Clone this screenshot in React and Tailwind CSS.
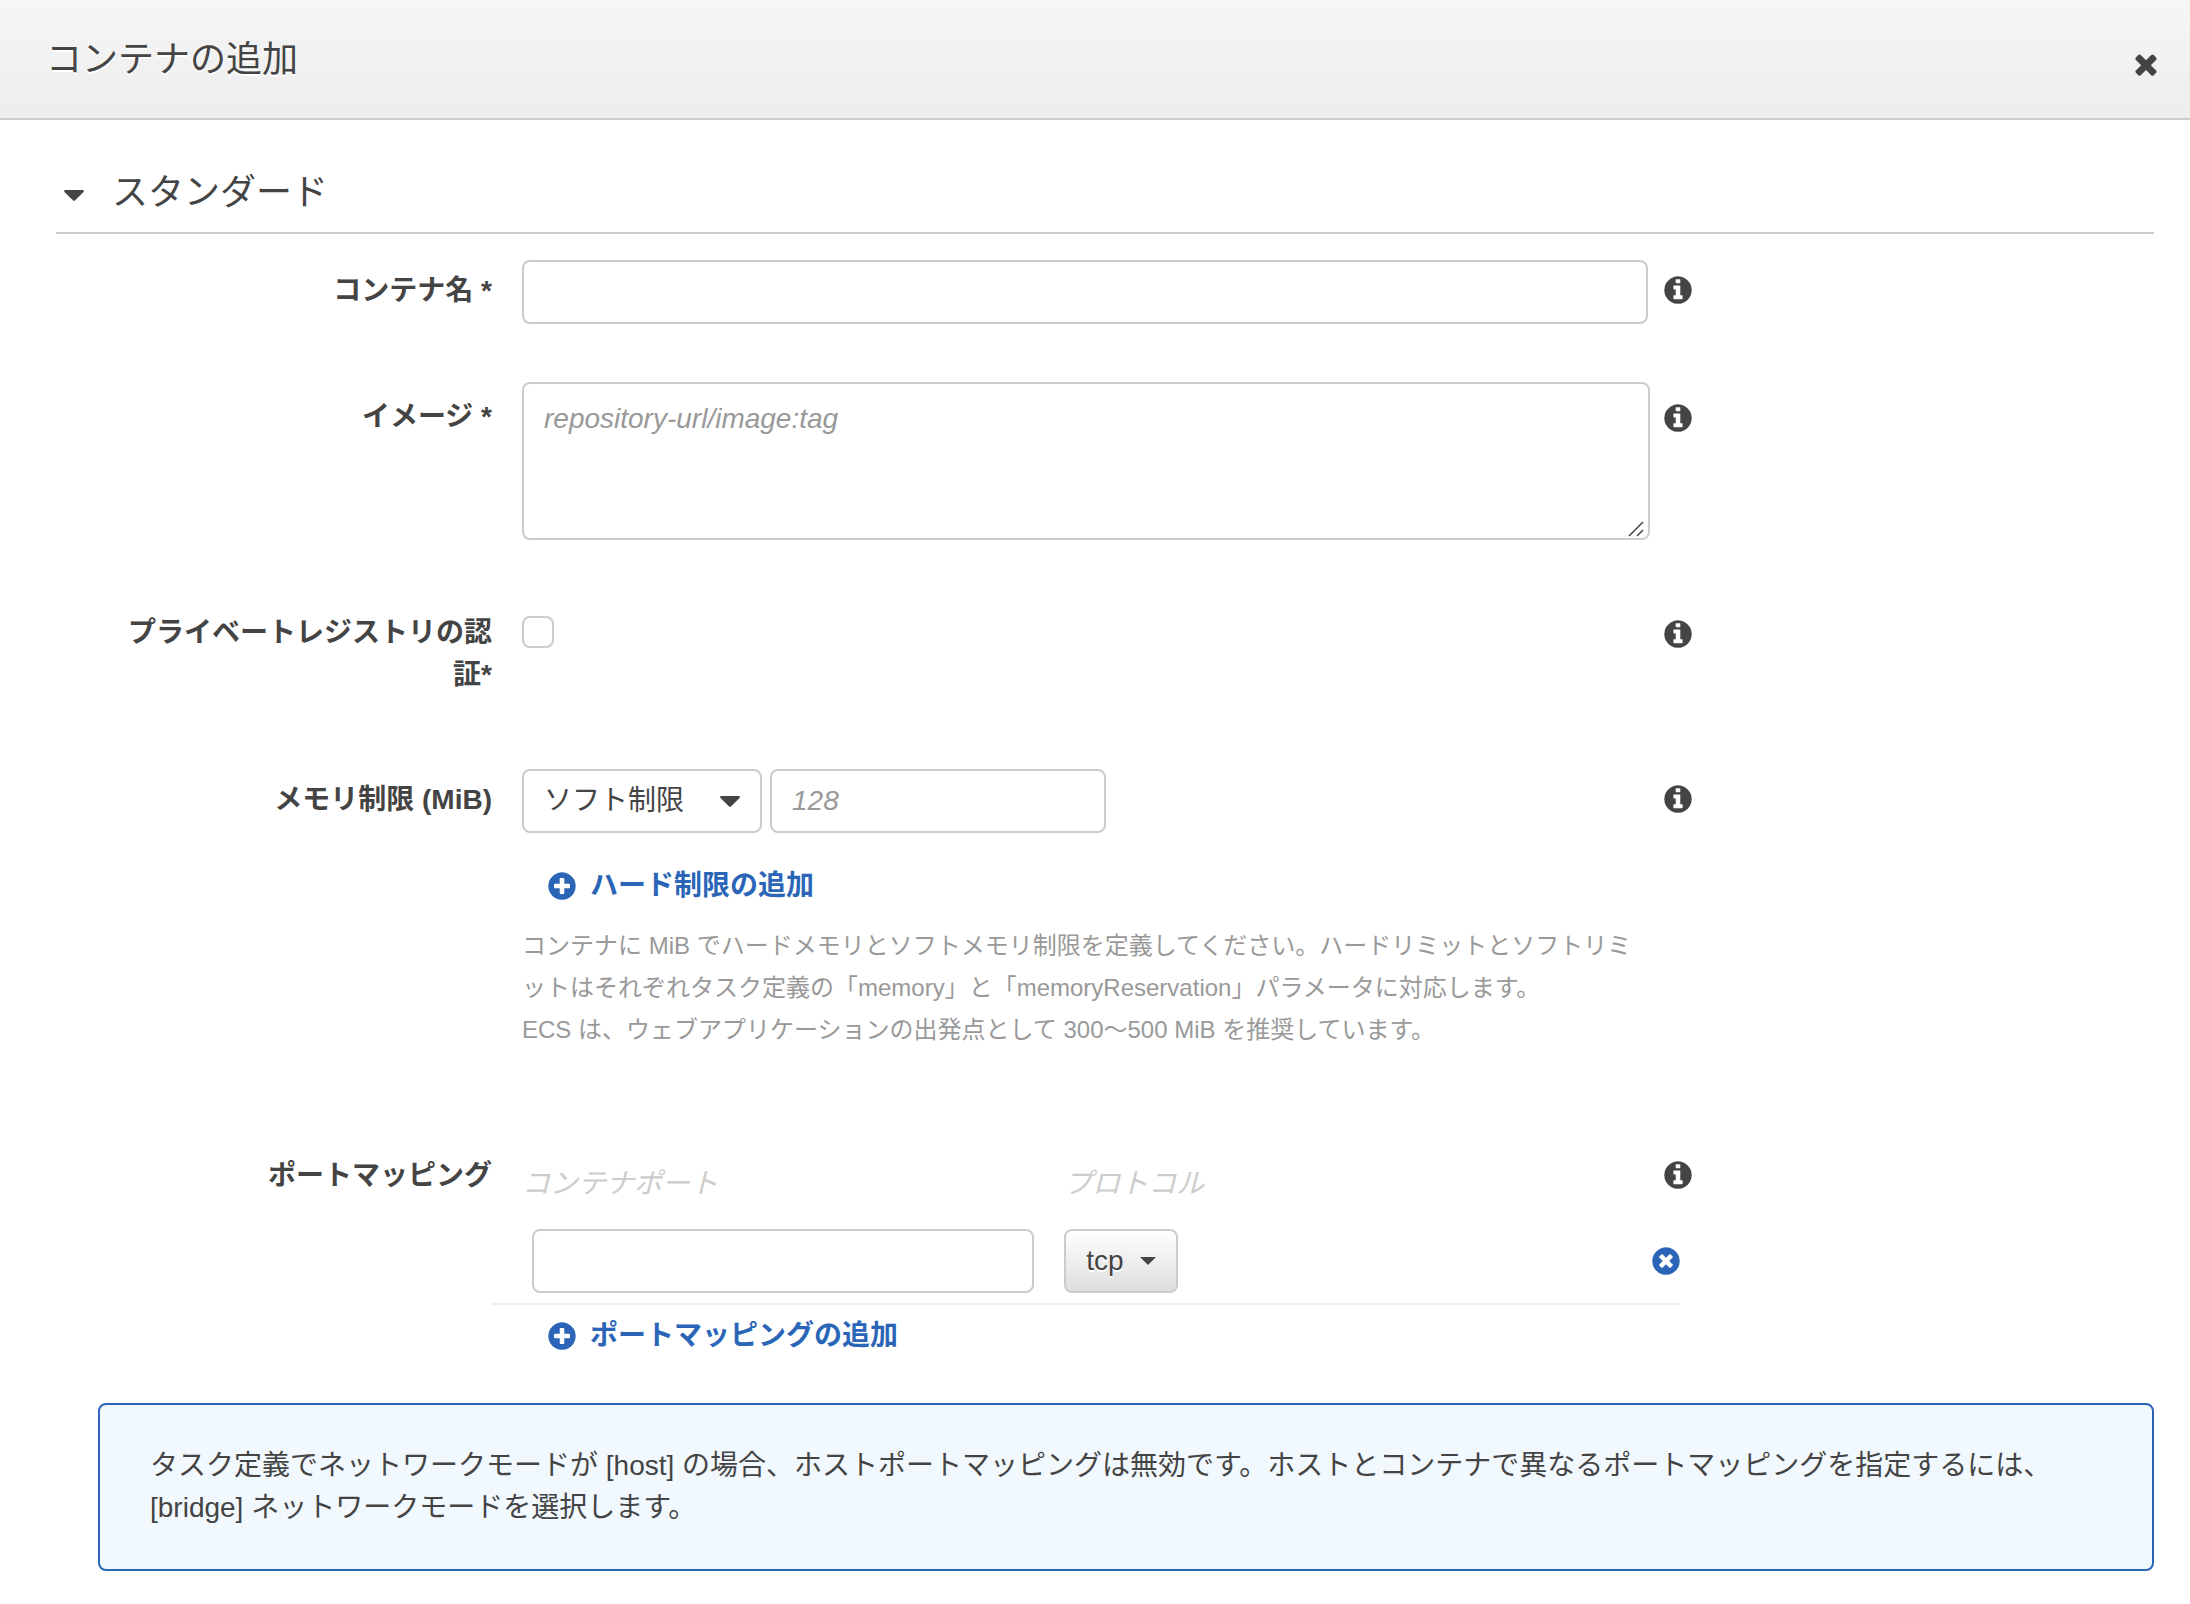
import React, { useState } from "react";

const CIRCLE =
  "M1664 896q0 209-103 385.5t-279.5 279.5-385.5 103-385.5-103-279.5-279.5-103-385.5 103-385.5 279.5-279.5 385.5-103 385.5 103 279.5 279.5 103 385.5z";

const icons = {
  info:
    "M1152 1376v-160q0-14-9-23t-23-9h-96v-512q0-14-9-23t-23-9h-320q-14 0-23 9t-9 23v160q0 14 9 23t23 9h96v320h-96q-14 0-23 9t-9 23v160q0 14 9 23t23 9h448q14 0 23-9t9-23zM1024 480v-160q0-14-9-23t-23-9h-192q-14 0-23 9t-9 23v160q0 14 9 23t23 9h192q14 0 23-9t9-23z" +
    CIRCLE,
  plus:
    "M1344 960v-128q0-26-19-45t-45-19h-256v-256q0-26-19-45t-45-19h-128q-26 0-45 19t-19 45v256h-256q-26 0-45 19t-19 45v128q0 26 19 45t45 19h256v256q0 26 19 45t45 19h128q26 0 45-19t19-45v-256h256q26 0 45-19t19-45z" +
    CIRCLE,
  remove:
    "M1277 1122q0-26-19-45l-181-181 181-181q19-19 19-45 0-27-19-46l-90-90q-19-19-46-19-26 0-45 19l-181 181-181-181q-19-19-45-19-27 0-46 19l-90 90q-19 19-19 46 0 26 19 45l181 181-181 181q-19 19-19 45 0 27 19 46l90 90q19 19 46 19 26 0 45-19l181-181 181 181q19 19 45 19 27 0 46-19l90-90q19-19 19-46z" +
    CIRCLE,
  close:
    "M1490 1322q0 40-28 68l-136 136q-28 28-68 28t-68-28l-294-294-294 294q-28 28-68 28t-68-28l-136-136q-28-28-28-68t28-68l294-294-294-294q-28-28-28-68t28-68l136-136q28-28 68-28t68 28l294 294 294-294q28-28 68-28t68 28l136 136q28 28 28 68t-28 68l-294 294 294 294q28 28 28 68z",
};

function Icon({ name, className = "size-8" }) {
  return (
    <svg
      viewBox="0 0 1792 1792"
      fill="currentColor"
      fillRule="evenodd"
      className={className}
      aria-hidden="true"
    >
      <path d={icons[name]} />
    </svg>
  );
}

function Caret({ className }) {
  return (
    <svg
      viewBox="0 0 20 11"
      fill="currentColor"
      className={className}
      aria-hidden="true"
    >
      <path d="M1 0h18q1.6 0.6 0.5 2l-8.3 8.3q-1.2 1-2.4 0l-8.3-8.3q-1.1-1.4 0.5-2z" />
    </svg>
  );
}

function InfoButton({ className = "pt-3.5" }) {
  return (
    <div className={className}>
      <button type="button" aria-label="情報" className="block -ml-0.5">
        <Icon name="info" />
      </button>
    </div>
  );
}

function AddLink({ children, onClick }) {
  return (
    <button
      type="button"
      onClick={onClick}
      className="ml-6 flex items-center gap-3 font-bold leading-[42px] text-[#2a65b7]"
    >
      <Icon name="plus" />
      {children}
    </button>
  );
}

function Row({ label, htmlFor, labelClass = "pt-2.5", infoClass, children }) {
  return (
    <div className="grid grid-cols-[466fr_1142fr_490fr]">
      <label
        htmlFor={htmlFor}
        className={`max-w-[410px] justify-self-end pr-[30px] text-right font-bold leading-[42px] ${labelClass}`}
      >
        {label}
      </label>
      <div className="pr-3.5">{children}</div>
      <InfoButton className={infoClass} />
    </div>
  );
}

const inputClass =
  "block h-16 rounded-lg border-2 border-[#ccc] bg-white px-5 outline-none placeholder:italic placeholder:text-[#999]";

export default function App() {
  const [auth, setAuth] = useState(false);
  const [limit, setLimit] = useState("soft");
  const [ports, setPorts] = useState([{ id: 1, port: "", protocol: "tcp" }]);

  const addPort = () =>
    setPorts([...ports, { id: Date.now(), port: "", protocol: "tcp" }]);

  const removePort = (id) => setPorts(ports.filter((p) => p.id !== id));

  const updatePort = (id, values) =>
    setPorts(ports.map((p) => (p.id === id ? { ...p, ...values } : p)));

  return (
    <div
      lang="ja"
      className="min-h-screen bg-white font-['Liberation_Sans','Noto_Sans_CJK_JP',sans-serif] text-[28px] text-[#444]"
    >
      <header className="flex h-[120px] items-center justify-between border-b-2 border-[#ccc] bg-linear-to-b from-[#f6f6f6] to-[#ededed] pt-0.5 pr-7 pl-[46px]">
        <h1 className="text-4xl text-shadow-[0_2px_0_#fff]">コンテナの追加</h1>
        <button type="button" aria-label="閉じる" className="mt-2">
          <Icon name="close" />
        </button>
      </header>

      <form
        className="pt-10 pr-9 pb-8 pl-14"
        onSubmit={(e) => e.preventDefault()}
      >
        <h2 className="flex h-[74px] items-start border-b-2 border-[#ccc] pl-2 text-4xl leading-[66px]">
          <button type="button" className="flex items-center gap-7">
            <Caret className="mt-1 h-[11px] w-5" />
            スタンダード
          </button>
        </h2>

        <div className="mt-[26px] space-y-[58px]">
          <Row label="コンテナ名 *" htmlFor="name">
            <div className="pr-0.5">
              <input id="name" type="text" className={`${inputClass} w-full`} />
            </div>
          </Row>

          <Row
            label="イメージ *"
            htmlFor="image"
            labelClass="pt-3.5"
            infoClass="pt-5"
          >
            <div className="relative">
              <textarea
                id="image"
                placeholder="repository-url/image:tag"
                className={`${inputClass} h-[158px] w-full resize-none py-3.5`}
              />
              <svg
                viewBox="0 0 16 16"
                className="pointer-events-none absolute right-1.5 bottom-[3px] size-4"
                stroke="#444"
                strokeWidth="1.5"
                aria-hidden="true"
              >
                <path d="M1 15L15 1M9 15l6-6" />
              </svg>
            </div>
          </Row>

          <div className="pb-[15px]">
            <Row
              label="プライベートレジストリの認証*"
              htmlFor="auth"
              labelClass="pt-3.5"
              infoClass="pt-5"
            >
              <input
                id="auth"
                type="checkbox"
                checked={auth}
                onChange={(e) => setAuth(e.target.checked)}
                className="mt-[18px] block size-8 appearance-none rounded-lg border-2 border-[#ccc] checked:bg-[#2a65b7]"
              />
            </Row>
          </div>

          <div className="pb-9">
            <Row label="メモリ制限 (MiB)" htmlFor="memory">
              <div className="flex gap-2">
                <div className="relative">
                  <select
                    aria-label="制限の種類"
                    value={limit}
                    onChange={(e) => setLimit(e.target.value)}
                    className={`${inputClass} w-60 appearance-none`}
                  >
                    <option value="soft">ソフト制限</option>
                    <option value="hard">ハード制限</option>
                  </select>
                  <Caret className="pointer-events-none absolute top-[27px] right-[22px] h-[11px] w-5" />
                </div>
                <input
                  id="memory"
                  type="text"
                  placeholder="128"
                  className={`${inputClass} w-[336px]`}
                />
              </div>
              <div className="mt-8">
                <AddLink>ハード制限の追加</AddLink>
              </div>
              <p className="mt-[18px] text-2xl leading-[42px] text-[#999]">
                コンテナに MiB でハードメモリとソフトメモリ制限を定義してください。ハードリミットとソフトリミットはそれぞれタスク定義の「memory」と「memoryReservation」パラメータに対応します。
                <br />
                ECS は、ウェブアプリケーションの出発点として 300〜500 MiB を推奨しています。
              </p>
            </Row>
          </div>

          <Row label="ポートマッピング" htmlFor="port-1">
            <div className="-mr-[30px] -ml-[30px]">
              <table className="w-full table-fixed">
                <thead>
                  <tr className="h-[84px] text-left align-top leading-[42px] text-[#ccc] italic">
                    <th className="w-[48%] pt-[18px] pl-[30px] font-normal">
                      コンテナポート
                    </th>
                    <th className="pt-[18px] pl-0.5 font-normal">
                      プロトコル
                    </th>
                    <td className="w-16" />
                  </tr>
                </thead>
                <tbody>
                  {ports.map((p) => (
                    <tr key={p.id} className="border-b-2 border-[#eee]">
                      <td className="pr-7 pb-2.5 pl-10">
                        <input
                          id={`port-${p.id}`}
                          type="text"
                          aria-label="コンテナポート"
                          value={p.port}
                          onChange={(e) =>
                            updatePort(p.id, { port: e.target.value })
                          }
                          className={`${inputClass} w-full`}
                        />
                      </td>
                      <td className="pb-2.5 pl-0.5">
                        <div className="relative w-[114px]">
                          <select
                            aria-label="プロトコル"
                            value={p.protocol}
                            onChange={(e) =>
                              updatePort(p.id, { protocol: e.target.value })
                            }
                            className="block h-16 w-full appearance-none rounded-lg border-2 border-[#ccc] bg-linear-to-b from-white to-[#ddd] pl-5 outline-none text-shadow-[0_2px_0_#fff]"
                          >
                            <option value="tcp">tcp</option>
                            <option value="udp">udp</option>
                          </select>
                          <svg
                            viewBox="0 0 16 8"
                            fill="currentColor"
                            className="pointer-events-none absolute top-7 right-[22px] h-2 w-4"
                            aria-hidden="true"
                          >
                            <path d="M0 0h16L8 8z" />
                          </svg>
                        </div>
                      </td>
                      <td className="pb-2.5">
                        <button
                          type="button"
                          aria-label="削除"
                          onClick={() => removePort(p.id)}
                          className="-mr-0.5 ml-auto block text-[#2a65b7]"
                        >
                          <Icon name="remove" />
                        </button>
                      </td>
                    </tr>
                  ))}
                </tbody>
              </table>
            </div>
            <div className="mt-2.5">
              <AddLink onClick={addPort}>ポートマッピングの追加</AddLink>
            </div>
          </Row>
        </div>

        <div className="mt-[46px] ml-[42px] rounded-lg border-2 border-[#2a65b7] bg-[#f1f8fe] px-[50px] py-10 leading-[42px]">
          タスク定義でネットワークモードが [host] の場合、ホストポートマッピングは無効です。ホストとコンテナで異なるポートマッピングを指定するには、[bridge] ネットワークモードを選択します。
        </div>
      </form>
    </div>
  );
}
